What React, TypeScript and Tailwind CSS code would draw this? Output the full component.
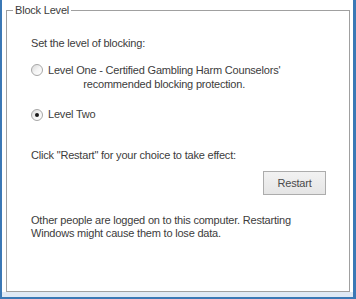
import React from "react";

const FONT = { fontFamily: '"Liberation Sans", Arial, sans-serif' };

function Radio({ checked }: { checked?: boolean }) {
  return (
    <span className="mt-[1px] flex h-[12px] w-[12px] shrink-0 items-center justify-center rounded-full border border-[#a7a7a7] bg-gradient-to-br from-[#d8d8d8] via-[#f4f4f4] to-white">
      {checked && <span className="h-[4px] w-[4px] rounded-full bg-[#1a1a1a]" />}
    </span>
  );
}

export default function App() {
  return (
    <div
      className="flex h-[299px] w-[356px] flex-col border-b-2 border-l-2 border-r-[3px] border-[#3b78b5] bg-[#dfe9f5] text-[11px] tracking-[-0.2px] text-[#3c3c3c]"
      style={FONT}
    >
      <div className="h-[292px] bg-white pl-[4px] pr-[3px] pt-[4px]">
        <fieldset className="h-[288px] border border-[#a0a0a0]">
          <legend className="ml-[6px] px-[2px] leading-[13px]">Block Level</legend>

          <div className="flex flex-col pl-[24px] pt-[20px] leading-[13px]">
            <p>Set the level of blocking:</p>

            {/* options */}
            <label className="mt-[13px] flex items-start gap-[5px]">
              <Radio />
              <span className="inline-block text-center leading-[14px]">
                Level One - Certified Gambling Harm Counselors'
                <br />
                recommended blocking protection.
              </span>
            </label>

            <label className="mt-[17px] flex items-start gap-[5px]">
              <Radio checked />
              <span>Level Two</span>
            </label>

            <p className="mt-[28px]">Click "Restart" for your choice to take effect:</p>

            <div className="mt-[9px] flex justify-end pr-[23px]">
              <button className="h-[24px] w-[63px] border border-[#acacac] bg-gradient-to-b from-[#f2f2f2] to-[#e5e5e5] text-[11px] text-[#4a4a4a]">
                Restart
              </button>
            </div>

            <p className="mt-[19px] w-[280px]">
              Other people are logged on to this computer. Restarting Windows might cause them to lose data.
            </p>
          </div>
        </fieldset>
      </div>
    </div>
  );
}
